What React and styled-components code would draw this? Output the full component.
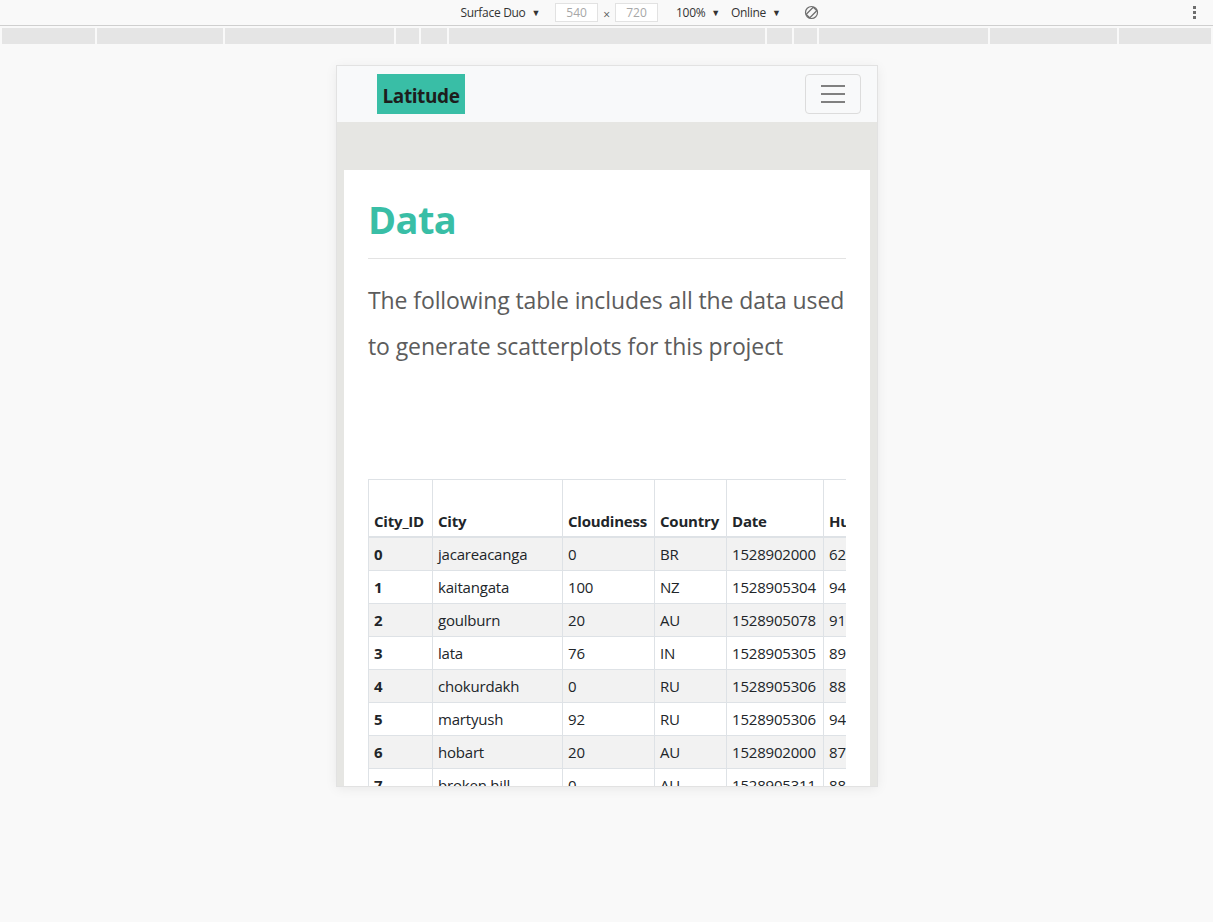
import styled, { createGlobalStyle } from "styled-components";

const GlobalStyle = createGlobalStyle`
  html, body {
    margin: 0;
    padding: 0;
    background: #f9f9f9;
  }
  body {
    font-family: "Noto Sans", "Open Sans", sans-serif;
  }
`;

const columns = [
  { key: "City_ID", width: 64 },
  { key: "City", width: 130 },
  { key: "Cloudiness", width: 92 },
  { key: "Country", width: 72 },
  { key: "Date", width: 97 },
  { key: "Humidity", width: 80 },
  { key: "Lat", width: 80 },
  { key: "Lng", width: 80 },
  { key: "Max Temp", width: 60 },
  { key: "Wind Speed", width: 60 },
];

const rows = [
  [0, "jacareacanga", 0, "BR", 1528902000, 62, -6.22, -57.76, 89.6, 4.7],
  [1, "kaitangata", 100, "NZ", 1528905304, 94, -46.28, 169.85, 42.61, 4.27],
  [2, "goulburn", 20, "AU", 1528905078, 91, -34.75, 149.72, 46.4, 6.93],
  [3, "lata", 76, "IN", 1528905305, 89, 30.78, 78.62, 59.8, 1.77],
  [4, "chokurdakh", 0, "RU", 1528905306, 88, 70.62, 147.9, 35.14, 5.06],
  [5, "martyush", 92, "RU", 1528905306, 94, 56.4, 61.87, 55.47, 6.93],
  [6, "hobart", 20, "AU", 1528902000, 87, -42.88, 147.33, 46.4, 5.82],
  [7, "broken hill", 0, "AU", 1528905311, 88, -31.97, 141.45, 46.4, 3.36],
];

const mediaSegments = [93, 126, 169, 23, 26, 316, 25, 23, 169, 127, 92];

// DevTools chrome
const Toolbar = styled.div`
  height: 25px;
  border-bottom: 1px solid #cfcfcf;
  display: flex;
  align-items: center;
  justify-content: center;
  font-family: "Open Sans", "Noto Sans", sans-serif;
  font-size: 12px;
  color: #333;
  position: relative;
  padding-left: 66px;
`;

const ToolItem = styled.span`
  display: inline-flex;
  align-items: center;
  gap: 6px;
  margin-left: ${(p) => p.$before || 0}px;
  margin-right: ${(p) => p.$gap || 0}px;
  letter-spacing: -0.3px;
`;

const Caret = styled.span`
  font-size: 9px;
  color: #333;
`;

const SizeInput = styled.span`
  width: 43px;
  height: 19px;
  border: 1px solid #e2e2e2;
  background: #fff;
  color: #a7a7a7;
  display: inline-flex;
  align-items: center;
  justify-content: center;
  box-sizing: border-box;
`;

const Times = styled.span`
  color: #555;
  margin: 3px 5px 0;
`;

const MoreDots = styled.div`
  position: absolute;
  right: 17px;
  top: 6px;
  display: flex;
  flex-direction: column;
  gap: 2px;
  span {
    width: 3px;
    height: 3px;
    background: #6e6e6e;
  }
`;

const MediaBar = styled.div`
  display: flex;
  gap: 2px;
  padding: 2px 2px 0;
  height: 16px;
`;

const MediaSegment = styled.div`
  background: #e5e5e5;
  flex: 0 0 auto;
`;

const Stage = styled.div`
  display: flex;
  justify-content: center;
  padding-top: 22px;
  padding-left: 1px;
  height: 856px;
  box-sizing: border-box;
`;

const Device = styled.div`
  width: 540px;
  height: 720px;
  background: #e6e6e3;
  overflow: hidden;
  box-shadow: 0 0 0 1px #e2e2e2, 0 2px 12px rgba(0, 0, 0, 0.08);
  font-family: "Open Sans", "Noto Sans", sans-serif;
`;

// Site
const Navbar = styled.nav`
  height: 56px;
  background: #f8f9fa;
  display: flex;
  align-items: center;
  justify-content: space-between;
  padding: 0 16px 0 40px;
  box-sizing: border-box;
`;

const Brand = styled.a`
  background: #39bea6;
  color: #1d1d1d;
  font-weight: 700;
  font-size: 19px;
  height: 40px;
  width: 88px;
  display: flex;
  align-items: center;
  justify-content: center;
  padding-top: 3px;
  box-sizing: border-box;
  letter-spacing: -0.4px;
`;

const Toggler = styled.button`
  width: 56px;
  height: 40px;
  border: 1px solid #dcdcdc;
  border-radius: 4px;
  background: transparent;
  display: flex;
  flex-direction: column;
  align-items: center;
  justify-content: center;
  gap: 6px;
  padding: 0;
  span {
    width: 24px;
    height: 2px;
    background: #808080;
  }
`;

const Main = styled.main`
  padding: 48px 7px 0;
`;

const Card = styled.section`
  background: #fff;
  padding: 24px 24px 40px;
`;

const Title = styled.h1`
  margin: 0;
  color: #39bea6;
  font-size: 38px;
  font-weight: 700;
  line-height: 50px;
  letter-spacing: -0.6px;
`;

const Rule = styled.hr`
  border: 0;
  border-top: 1px solid #e3e3e3;
  margin: 14px 0 0;
`;

const Lead = styled.p`
  margin: 18px 0 0;
  color: #5c5c5c;
  font-size: 23px;
  font-weight: 400;
  line-height: 46px;
  letter-spacing: -0.1px;
`;

const TableWrap = styled.div`
  margin-top: 110px;
  overflow: hidden;
`;

const Table = styled.table`
  border-collapse: collapse;
  table-layout: fixed;
  width: ${(p) => p.$width}px;
  font-size: 15px;
  color: #212529;
  border-top: 1px solid #dee2e6;
  border-left: 1px solid #dee2e6;
`;

const Th = styled.th`
  height: 51px;
  text-align: left;
  vertical-align: bottom;
  padding: 0 5px 5px;
  border-right: 1px solid #dee2e6;
  border-bottom: 2px solid #dee2e6;
  font-weight: 700;
  white-space: nowrap;
  overflow: hidden;
  letter-spacing: -0.2px;
`;

const Tr = styled.tr`
  background: ${(p) => (p.$striped ? "#f2f2f2" : "#fff")};
`;

const Td = styled.td`
  height: 32px;
  padding: 0 5px;
  border-right: 1px solid #dee2e6;
  border-bottom: 1px solid #dee2e6;
  font-weight: ${(p) => (p.$bold ? 700 : 400)};
  white-space: nowrap;
  overflow: hidden;
  letter-spacing: -0.2px;
`;

function RotateIcon() {
  return (
    <svg width="15" height="15" viewBox="0 0 15 15" fill="none" stroke="#6e6e6e" strokeWidth="1.2">
      <circle cx="7.5" cy="7.5" r="6" />
      <rect x="5" y="2.5" width="5" height="10" rx="0.8" transform="rotate(45 7.5 7.5)" />
    </svg>
  );
}

export default function App() {
  const tableWidth = columns.reduce((s, c) => s + c.width, 0);
  return (
    <>
      <GlobalStyle />
      <Toolbar>
        <ToolItem $gap={15}>
          Surface Duo <Caret>▼</Caret>
        </ToolItem>
        <SizeInput>540</SizeInput>
        <Times>×</Times>
        <SizeInput>720</SizeInput>
        <ToolItem $before={18} $gap={11}>
          100% <Caret>▼</Caret>
        </ToolItem>
        <ToolItem $gap={23}>
          Online <Caret>▼</Caret>
        </ToolItem>
        <RotateIcon />
        <MoreDots>
          <span />
          <span />
          <span />
        </MoreDots>
      </Toolbar>
      <MediaBar>
        {mediaSegments.map((w, i) => (
          <MediaSegment key={i} style={{ width: w }} />
        ))}
      </MediaBar>
      <Stage>
        <Device>
          <Navbar>
            <Brand>Latitude</Brand>
            <Toggler aria-label="Toggle navigation">
              <span />
              <span />
              <span />
            </Toggler>
          </Navbar>
          <Main>
            <Card>
              <Title>Data</Title>
              <Rule />
              <Lead>
                The following table includes all the data used to generate scatterplots for this project
              </Lead>
              <TableWrap>
                <Table $width={tableWidth}>
                  <colgroup>
                    {columns.map((c) => (
                      <col key={c.key} style={{ width: c.width }} />
                    ))}
                  </colgroup>
                  <thead>
                    <tr>
                      {columns.map((c) => (
                        <Th key={c.key}>{c.key}</Th>
                      ))}
                    </tr>
                  </thead>
                  <tbody>
                    {rows.map((r, i) => (
                      <Tr key={i} $striped={i % 2 === 0}>
                        {r.map((v, j) => (
                          <Td key={j} $bold={j === 0}>
                            {v}
                          </Td>
                        ))}
                      </Tr>
                    ))}
                  </tbody>
                </Table>
              </TableWrap>
            </Card>
          </Main>
        </Device>
      </Stage>
    </>
  );
}
